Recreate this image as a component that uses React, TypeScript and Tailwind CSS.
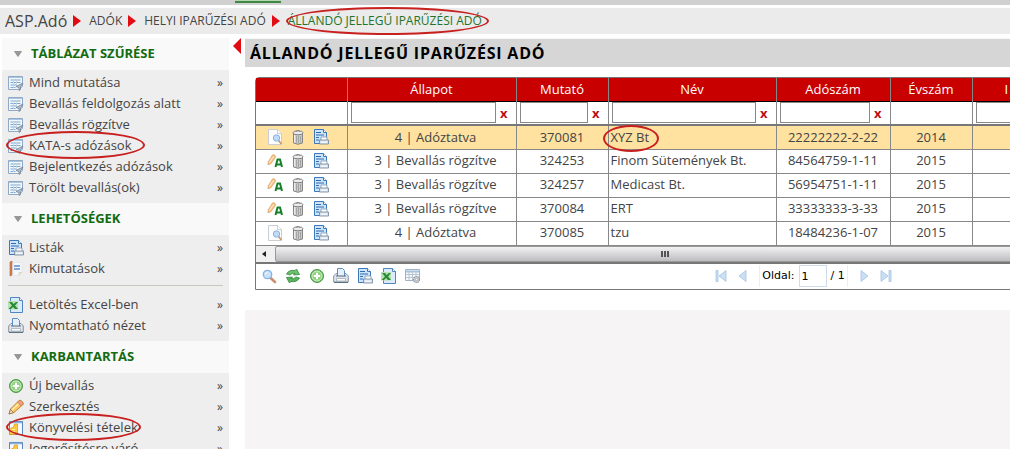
import type { ReactNode } from 'react'

type IconName =
  | 'filter' | 'report' | 'chart' | 'excel' | 'printer' | 'add' | 'pencil' | 'book'
  | 'preview' | 'edit' | 'trash' | 'search' | 'refresh' | 'settings'

const drawings: Record<IconName, ReactNode> = {
  filter: (
    <>
      <path d="M.5 1.500h14v10l-4 3H.5z" fill="#f2f7fc" stroke="#8fa9c6" />
      <path d="M1 2.500h13" stroke="#a9c6e2" />
      <path d="M2.500 5h10M2.500 7.500h10M2.500 10h6M2.500 12.500h5" stroke="#7fa5ca" />
      <path d="M5.500 4v9M8.500 4v7" stroke="#c3d6e8" />
      <path d="M8 11.500l7-3.500-2.500 4v2.500l-1.500 1v-3z" fill="#b4c2cf" stroke="#6f8193" strokeWidth=".8" />
    </>
  ),
  report: (
    <>
      <path d="M1.500 .5h9l3 3v11h-12z" fill="#cfe3fa" stroke="#3d78b8" />
      <path d="M10.500 .5v3h3" fill="#fff" stroke="#3d78b8" />
      <path d="M3 3.500h5M3 6h8M3 8.500h3M3 11h3" stroke="#2d6db0" strokeWidth="1.200" />
      <path d="M8 8h6v3.500H8z" fill="#fff" stroke="#7f98b2" strokeWidth=".8" />
      <path d="M6.500 11h9v4h-9z" fill="#dbe4ee" stroke="#6d8299" strokeWidth=".8" />
      <path d="M8 13.200h6" stroke="#fff" />
    </>
  ),
  chart: (
    <>
      <path d="M2 1l2-1v14l-2 1z" fill="#d9824f" stroke="#ae5e36" strokeWidth=".6" />
      <path d="M5 1.500h9v10l-3 3H5z" fill="#f4f7fb" stroke="#dde3ea" strokeWidth=".7" />
      <path d="M6 5h6M6 8h6" stroke="#5b8ed1" strokeWidth="1.500" />
      <path d="M11 14.500v-3h3" fill="#e8ddc2" stroke="#d4c9ae" strokeWidth=".6" />
    </>
  ),
  excel: (
    <>
      <path d="M2.500 .5h9l3 3v12h-12z" fill="#dcebfb" stroke="#4f86bd" />
      <path d="M11.500 .5v3h3" fill="#fff" stroke="#4f86bd" />
      <path d="M0 4h10v8.500H0z" fill="#b9e0b6" />
      <path d="M1 5h3l1.500 2L8 5h2L7 8.500l3 3.500H7L5 10l-2 2H.5L4 8.500z" fill="#278a35" />
    </>
  ),
  printer: (
    <>
      <path d="M.7 8l2.300-2.500h10L15.300 8v6H.7z" fill="#dfe5ec" stroke="#7a8899" strokeWidth=".9" />
      <path d="M4.500 8V.5h5l2 2V8" fill="#e5f0fc" stroke="#5f8dc2" />
      <path d="M3 8h10" stroke="#596879" />
      <path d="M3.500 10.500h9v2.500h-9z" fill="#fff" stroke="#a3afbb" strokeWidth=".8" />
      <path d="M1 14.500h14" stroke="#5f6f82" />
    </>
  ),
  add: (
    <>
      <circle cx="8" cy="8" r="6.500" fill="#67b95c" stroke="#4c9a46" />
      <circle cx="8" cy="8" r="5" fill="#8ed07f" stroke="#d8f2d1" />
      <path d="M8 4.800v6.400M4.800 8h6.400" stroke="#fff" strokeWidth="2.200" />
    </>
  ),
  pencil: (
    <>
      <path d="M1 15l1.500-5L11 1.500q2-1 3.500 1.500t0 3L6 13.500z" fill="#fbc65e" stroke="#b97b32" strokeWidth=".9" />
      <path d="M4 11L12.500 3" stroke="#fff0b6" strokeWidth="1.400" />
      <path d="M1 15l1.500-4.500 3 3z" fill="#f3dfbf" stroke="#8f6a3e" strokeWidth=".7" />
      <path d="M11 1.500q2-1 3.500 1.500t0 3l-1.500 1-3.300-3.500z" fill="#ee9d8a" stroke="#b97b32" strokeWidth=".6" />
    </>
  ),
  book: (
    <>
      <path d="M1.500 1.500h13v13h-13z" fill="#f5f9ff" stroke="#5686bd" />
      <path d="M2 2.500h12" stroke="#88b2e0" strokeWidth="1.500" />
      <path d="M1.500 9l4-2 1-3h3v9l-3 1.500h-5z" fill="#ffc83d" stroke="#dd9a1b" strokeWidth=".7" />
      <path d="M4 9.500h3M4 11.500h3" stroke="#fff0a8" />
    </>
  ),
  preview: (
    <>
      <path d="M1.500 .5h9l4 4v11h-13z" fill="#fdfdfd" stroke="#c9ced4" />
      <path d="M10.500 .5v4h4" fill="#fff" stroke="#c9ced4" />
      <path d="M11.500 11.500l3 3.500" stroke="#c49a72" strokeWidth="1.800" />
      <circle cx="9.500" cy="9" r="3.200" fill="#bedcfa" stroke="#8bb1dc" />
    </>
  ),
  edit: (
    <>
      <path d="M.8 11.500l.7-3L5.500 2q1.500-1 2.500.5t0 2.500L3.500 11z" fill="#f8c58a" stroke="#d9975b" strokeWidth=".7" />
      <path d="M2.500 9.500l4-6" stroke="#fff0cf" />
      <path d="M8.500 14l2-7.500h2.500l2 7.500M9.500 11.500h4.500" fill="none" stroke="#168127" strokeWidth="2" />
    </>
  ),
  trash: (
    <>
      <path d="M3.500 4h9v10q-4.500 2.500-9 0z" fill="#c9c9c9" stroke="#858585" />
      <path d="M6.500 7v6.500M8.500 7v7M10.500 7v6.500" stroke="#9b9b9b" strokeWidth=".8" />
      <path d="M4.700 6v7.500" stroke="#f6f6f6" />
      <ellipse cx="8" cy="3.800" rx="5" ry="2" fill="#ececec" stroke="#808080" />
      <path d="M6 2.500q2-2.500 4 0" fill="none" stroke="#888" />
    </>
  ),
  search: (
    <>
      <path d="M9 9.500l5 4.500" stroke="#c98f70" strokeWidth="2.600" strokeLinecap="round" />
      <circle cx="6.500" cy="6.500" r="4.200" fill="#c8e2fb" stroke="#89b2df" strokeWidth="1.300" />
      <path d="M4.500 6q.5-1.500 2-1.500" stroke="#fff" fill="none" />
    </>
  ),
  refresh: (
    <>
      <path d="M1.500 6Q4 1.500 10 2.500L11.500 1l3 5.500-6 .5L10 5.500Q7 4.500 5 7z" fill="#6cc26c" stroke="#34863d" strokeWidth=".8" />
      <path d="M14.500 10Q12 14.500 6 13.500L4.500 15l-3-5.500 6-.5L6 10.500q3 1 5-1.500z" fill="#58b45c" stroke="#34863d" strokeWidth=".8" />
    </>
  ),
  settings: (
    <>
      <path d="M.5 1.500h14v11H.5z" fill="#f6f9fc" stroke="#9fb2c6" />
      <path d="M1 3.500h13" stroke="#a9c2dc" strokeWidth="2" />
      <path d="M1 6.500h13M1 9.500h13M4 4v8M7.500 4v8M11 4v8" stroke="#b9c5d1" />
      <circle cx="11.500" cy="11.500" r="3" fill="#d5d8dc" stroke="#8e979f" strokeWidth="1.200" strokeDasharray="1.500 .6" />
      <circle cx="11.500" cy="11.500" r="1.200" fill="#fff" stroke="#8e979f" strokeWidth=".7" />
    </>
  ),
}

function Icon({ name }: { name: IconName }) {
  return (
    <svg viewBox="0 0 16 16" className="size-4 shrink-0" aria-hidden="true">
      {drawings[name]}
    </svg>
  )
}

// Hand-drawn style highlight that sits over the marked text
function Ring({ className }: { className: string }) {
  return (
    <span className={`pointer-events-none absolute z-10 rounded-[50%] border-2 border-[#c8201f] ${className}`} />
  )
}

function CrumbArrow() {
  return (
    <svg viewBox="0 0 8 12" className="mr-2 ml-1.5 h-3 w-2 shrink-0" aria-hidden="true">
      <path d="M0 0l8 6-8 6z" fill="#e10b14" />
    </svg>
  )
}

type MenuItem = { label: string; icon: IconName; marked?: string }

const sections: { title: string; groups: MenuItem[][] }[] = [
  {
    title: 'TÁBLÁZAT SZŰRÉSE',
    groups: [
      [
        { label: 'Mind mutatása', icon: 'filter' },
        { label: 'Bevallás feldolgozás alatt', icon: 'filter' },
        { label: 'Bevallás rögzítve', icon: 'filter' },
        { label: 'KATA-s adózások', icon: 'filter', marked: '-top-1 left-1 h-7 w-[139px]' },
        { label: 'Bejelentkezés adózások', icon: 'filter' },
        { label: 'Törölt bevallás(ok)', icon: 'filter' },
      ],
    ],
  },
  {
    title: 'LEHETŐSÉGEK',
    groups: [
      [
        { label: 'Listák', icon: 'report' },
        { label: 'Kimutatások', icon: 'chart' },
      ],
      [
        { label: 'Letöltés Excel-ben', icon: 'excel' },
        { label: 'Nyomtatható nézet', icon: 'printer' },
      ],
    ],
  },
  {
    title: 'KARBANTARTÁS',
    groups: [
      [
        { label: 'Új bevallás', icon: 'add' },
        { label: 'Szerkesztés', icon: 'pencil' },
        { label: 'Könyvelési tételek', icon: 'book', marked: '-top-1 left-1 h-7 w-[135px]' },
        { label: 'Jogerősítésre váró', icon: 'book' },
      ],
    ],
  },
]

const rows = [
  { state: '4 | Adóztatva', id: '370081', name: 'XYZ Bt', tax: '22222222-2-22', year: '2014', open: false },
  { state: '3 | Bevallás rögzítve', id: '324253', name: 'Finom Sütemények Bt.', tax: '84564759-1-11', year: '2015', open: true },
  { state: '3 | Bevallás rögzítve', id: '324257', name: 'Medicast Bt.', tax: '56954751-1-11', year: '2015', open: true },
  { state: '3 | Bevallás rögzítve', id: '370084', name: 'ERT', tax: '33333333-3-33', year: '2015', open: true },
  { state: '4 | Adóztatva', id: '370085', name: 'tzu', tax: '18484236-1-07', year: '2015', open: false },
]

const columns = [
  { label: '', filter: false },
  { label: 'Állapot', filter: true },
  { label: 'Mutató', filter: true },
  { label: 'Név', filter: true },
  { label: 'Adószám', filter: true },
  { label: 'Évszám', filter: false },
]

const tools: { name: IconName; label: string }[] = [
  { name: 'search', label: 'Keresés' },
  { name: 'refresh', label: 'Frissítés' },
  { name: 'add', label: 'Új' },
  { name: 'printer', label: 'Nyomtatás' },
  { name: 'report', label: 'Lista' },
  { name: 'excel', label: 'Excel' },
  { name: 'settings', label: 'Beállítások' },
]

function Sidebar() {
  return (
    <nav className="w-[227px] shrink-0">
      {sections.map((section) => (
        <section key={section.title}>
          <h2 className="flex h-8 items-center gap-2 bg-[#f9f9f9] pl-3 text-[13px] font-bold text-[#116b11]">
            <svg viewBox="0 0 8 6" className="mr-px h-1.5 w-2" aria-hidden="true">
              <path d="M.5 .5h7L4 5.500z" fill="#999" stroke="#777" strokeWidth=".6" />
            </svg>
            {section.title}
          </h2>
          <div className="bg-[#eee] pt-0.5 pb-[5px]">
            {section.groups.map((group, i) => (
              <ul key={i} className={i > 0 ? 'mx-1.5 mt-1.5 border-t border-[#c9c9c2] pt-2' : 'mx-1.5'}>
                {group.map((item) => (
                  <li key={item.label} className="relative">
                    <a href="#" className="flex h-[21px] items-center gap-[5px] whitespace-nowrap">
                      <Icon name={item.icon} />
                      <span className="grow">{item.label}</span>
                      <span className="text-xs">»</span>
                    </a>
                    {item.marked && <Ring className={`-ml-1.5 ${item.marked}`} />}
                  </li>
                ))}
              </ul>
            ))}
          </div>
        </section>
      ))}
    </nav>
  )
}

function PageButton({ label, d }: { label: string; d: string }) {
  return (
    <button type="button" aria-label={label}>
      <svg viewBox="0 0 12 12" className="size-3" aria-hidden="true">
        <path d={d} fill="#c9dff3" stroke="#a3c4e2" strokeWidth=".8" />
      </svg>
    </button>
  )
}

function Grid() {
  return (
    <div className="min-w-[1092px] rounded-t-sm border border-[#777] bg-white">
      <table className="w-full table-fixed border-collapse text-[13px]">
        <colgroup>
          <col className="w-[91px]" />
          <col className="w-[169px]" />
          <col className="w-[92px]" />
          <col className="w-[168px]" />
          <col className="w-[114px]" />
          <col className="w-[82px]" />
          <col />
        </colgroup>
        <thead>
          <tr className="h-[23px] border-b border-black bg-[#c90000] text-white">
            {columns.map((col) => (
              <th key={col.label} className="border-r border-[#888] p-0 font-normal">{col.label}</th>
            ))}
            <th className="p-0 pl-8 text-left font-normal">I</th>
          </tr>
          <tr className="h-6 border-b-2 border-[#777]">
            {columns.map((col) => (
              <td key={col.label} className="border-r border-[#888] p-0">
                {col.filter && (
                  <div className="flex items-center pr-2 pl-[3px]">
                    <input aria-label={col.label} className="h-[21px] w-0 grow border border-[#888] px-1" />
                    <button type="button" aria-label={`${col.label} törlése`} className="pl-1 text-[13px] leading-4 font-bold text-[#c00d12]">
                      x
                    </button>
                  </div>
                )}
              </td>
            ))}
            <td className="p-0 pl-[3px]">
              <input aria-label="I" className="block h-[21px] w-full border border-[#888]" />
            </td>
          </tr>
        </thead>
        <tbody>
          {rows.map((row, i) => (
            <tr key={row.id} className={`h-6 border-b border-[#888] ${i === 0 ? 'bg-[#ffe1a0]' : ''}`}>
              <td className="border-r border-[#888] p-0">
                <div className="flex items-center gap-[7px] pl-[11px]">
                  <Icon name={row.open ? 'edit' : 'preview'} />
                  <Icon name="trash" />
                  <Icon name="report" />
                </div>
              </td>
              <td className="border-r border-[#888] p-0 pl-2 text-center">{row.state}</td>
              <td className="border-r border-[#888] p-0 text-center">{row.id}</td>
              <td className="relative border-r border-[#888] p-0 pl-0.5">
                {row.name}
                {i === 0 && <Ring className="-top-px -left-1.5 h-[27px] w-14" />}
              </td>
              <td className="border-r border-[#888] p-0 text-center">{row.tax}</td>
              <td className="border-r border-[#888] p-0 text-center">{row.year}</td>
              <td />
            </tr>
          ))}
        </tbody>
      </table>

      {/* Horizontal scrollbar */}
      <div className="flex h-[18px] items-center border-b-2 border-[#777] bg-[#f0f0f0]">
        <svg viewBox="0 0 19 8" className="h-2 w-[19px]" aria-hidden="true">
          <path d="M10 1v6L6 4z" fill="#222" />
        </svg>
        <div className="flex h-4 w-[780px] items-center justify-center gap-px rounded-xs border border-[#999] bg-linear-to-b from-[#f2f2f3] to-[#bdbdc1]">
          <span className="h-1.5 w-0.5 bg-[#555]" />
          <span className="h-1.5 w-0.5 bg-[#555]" />
          <span className="h-1.5 w-0.5 bg-[#555]" />
        </div>
      </div>

      <div className="flex h-[25px] items-center">
        <div className="flex flex-1 items-center gap-2 pl-[5px]">
          {tools.map((tool) => (
            <button key={tool.name} type="button" aria-label={tool.label}>
              <Icon name={tool.name} />
            </button>
          ))}
        </div>
        <div className="flex items-center gap-2.5 font-['DejaVu_Sans',sans-serif] text-[11px] text-black">
          <PageButton label="Első" d="M1 .5h2v11H1zM11 .5v11L4 6z" />
          <PageButton label="Előző" d="M9 .5v11L2 6z" />
          <label className="flex items-center gap-1 border-x border-[#eee] px-0.5">
            Oldal:
            <input defaultValue="1" className="h-[22px] w-7 border border-[#d0dcea] px-0.5" />
            <span>/ 1</span>
          </label>
          <PageButton label="Következő" d="M3 .5v11L10 6z" />
          <PageButton label="Utolsó" d="M9 .5h2v11H9zM1 .5v11L8 6z" />
        </div>
        <div className="flex-1" />
      </div>
    </div>
  )
}

export default function App() {
  return (
    <div className="flex h-screen flex-col overflow-hidden bg-white font-['Open_Sans',sans-serif] text-[13px] text-[#444]">
      <div className="h-[5px] shrink-0 bg-[#d0d0d0] pl-[235px]">
        <div className="h-[3px] w-[46px] border-b-2 border-[#3f8a43] bg-[#b9d5b5]" />
      </div>

      <header className="mt-[3px] flex h-[26px] shrink-0 items-center bg-[#ebebeb] pl-[5px] text-xs whitespace-nowrap">
        <a href="#" className="text-base">ASP.Adó</a>
        <CrumbArrow />
        <a href="#">ADÓK</a>
        <CrumbArrow />
        <a href="#">HELYI IPARŰZÉSI ADÓ</a>
        <CrumbArrow />
        <a href="#" className="relative text-[#24732a]">
          ÁLLANDÓ JELLEGŰ IPARŰZÉSI ADÓ
          <Ring className="-top-1.5 -left-0.5 h-7 w-[203px]" />
        </a>
      </header>

      <div className="mt-1 flex min-h-0 grow pl-0.5">
        <Sidebar />

        <div className="w-4 shrink-0 pl-1">
          <button type="button" aria-label="Menü elrejtése" className="block">
            <svg viewBox="0 0 8 16" className="h-4 w-2" aria-hidden="true">
              <path d="M8 0v16L0 8z" fill="#e10b14" />
            </svg>
          </button>
        </div>

        <main className="min-w-0 grow overflow-hidden bg-[#f6f4f5]">
          <h1 className="mt-px flex h-7 items-center bg-[#d6d6d6] pl-[5px] text-base font-bold tracking-wider text-black">
            ÁLLANDÓ JELLEGŰ IPARŰZÉSI ADÓ
          </h1>
          <div className="bg-white pt-2.5 pb-5 pl-2.5">
            <Grid />
          </div>
        </main>
      </div>
    </div>
  )
}
